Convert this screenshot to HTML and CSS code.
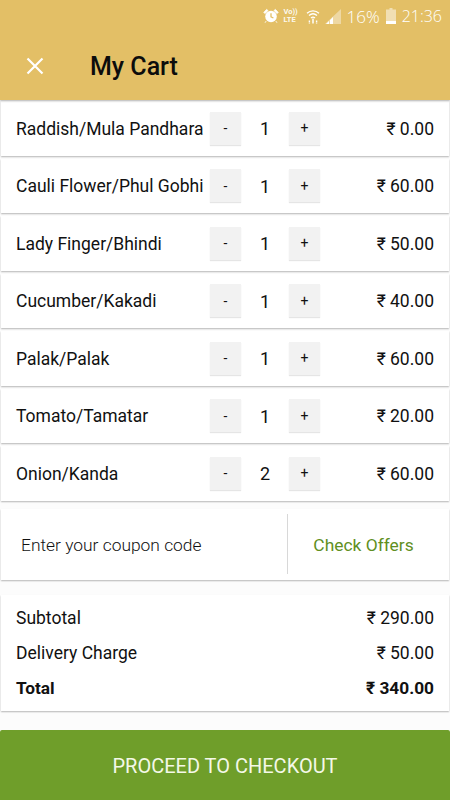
FILE: index.html
```html
<!DOCTYPE html>
<html lang="en">
<head>
<meta charset="utf-8">
<title>My Cart</title>
<link rel="stylesheet" href="styles.css">
</head>
<body>
<div class="screen">
  <header class="header">
    <div class="status">
      <svg class="ic-alarm" width="16" height="16" viewBox="0 0 16 16"><circle cx="8" cy="8.5" r="5.8" fill="#fff"/><path d="M8 5.2V8.8L10.4 10" stroke="#e3bf66" stroke-width="1.3" fill="none"/><path d="M0.8 4.4 3.6 1.4 5 2.6 2 5.6ZM15.2 4.4 12.4 1.4 11 2.6 14 5.6ZM3.2 13l-1.2 1.8M12.8 13l1.2 1.8" fill="#fff" stroke="#fff" stroke-width="0.8"/></svg>
      <span class="lte"><span>Vo))</span><span>LTE</span></span>
      <svg class="ic-wifi" width="14" height="17" viewBox="0 0 14 17"><path d="M1 5.2C4.4 2 9.6 2 13 5.2M3 7.6C5.4 5.4 8.6 5.4 11 7.6M5 10C6.2 9 7.8 9 9 10" stroke="#fff" stroke-width="1.3" fill="none"/><path d="M7 10.5v5" stroke="#fff" stroke-width="1.5"/><path d="M3.4 12.5v3M10.6 12.5v3" stroke="#fff" stroke-width="1.4" stroke-dasharray="1.5 .6"/></svg>
      <svg class="ic-signal" width="16" height="15" viewBox="0 0 16 15"><path d="M16 0V15H0Z" fill="#fff" opacity=".4"/><path d="M1 15 4 12V15ZM5 15V11L8 8V15Z" fill="#fff"/></svg>
      <span class="pct">16%</span>
      <svg class="ic-batt" width="10" height="16" viewBox="0 0 10 16"><path d="M3.5 0H6.5V1.4H10V16H0V1.4H3.5Z" fill="#fff" opacity=".5"/><path d="M0 13H10V16H0Z" fill="#fff"/></svg>
      <span class="time">21:36</span>
    </div>
    <div class="toolbar">
      <svg class="ic-close" width="18" height="18" viewBox="0 0 18 18"><path d="M1.5 1.5 16.5 16.5M16.5 1.5 1.5 16.5" stroke="#fff" stroke-width="2.2" fill="none"/></svg>
      <h1 class="title">My Cart</h1>
    </div>
  </header>

  <main class="items">
    <div class="card row"><span class="name">Raddish/Mula Pandhara</span><div class="qty"><span class="btn">-</span><span class="count">1</span><span class="btn">+</span></div><span class="price">₹ 0.00</span></div>
    <div class="card row"><span class="name">Cauli Flower/Phul Gobhi</span><div class="qty"><span class="btn">-</span><span class="count">1</span><span class="btn">+</span></div><span class="price">₹ 60.00</span></div>
    <div class="card row"><span class="name">Lady Finger/Bhindi</span><div class="qty"><span class="btn">-</span><span class="count">1</span><span class="btn">+</span></div><span class="price">₹ 50.00</span></div>
    <div class="card row"><span class="name">Cucumber/Kakadi</span><div class="qty"><span class="btn">-</span><span class="count">1</span><span class="btn">+</span></div><span class="price">₹ 40.00</span></div>
    <div class="card row"><span class="name">Palak/Palak</span><div class="qty"><span class="btn">-</span><span class="count">1</span><span class="btn">+</span></div><span class="price">₹ 60.00</span></div>
    <div class="card row"><span class="name">Tomato/Tamatar</span><div class="qty"><span class="btn">-</span><span class="count">1</span><span class="btn">+</span></div><span class="price">₹ 20.00</span></div>
    <div class="card row"><span class="name">Onion/Kanda</span><div class="qty"><span class="btn">-</span><span class="count">2</span><span class="btn">+</span></div><span class="price">₹ 60.00</span></div>
  </main>

  <section class="card coupon">
    <span class="coupon-input">Enter your coupon code</span>
    <span class="offers">Check Offers</span>
  </section>

  <section class="card summary">
    <div class="sum-row"><span>Subtotal</span><span>₹ 290.00</span></div>
    <div class="sum-row"><span>Delivery Charge</span><span>₹ 50.00</span></div>
    <div class="sum-row total"><span>Total</span><span>₹ 340.00</span></div>
  </section>

  <div class="checkout">PROCEED TO CHECKOUT</div>
</div>
</body>
</html>
```
FILE: styles.css
```css
* { box-sizing: border-box; }
html, body { margin: 0; padding: 0; }
body { font-family: Roboto, "DejaVu Sans", sans-serif; color: #111; background: #fcfcfc; }
.screen { width: 450px; height: 800px; overflow: hidden; display: flex; flex-direction: column; background: #fcfcfc; }

.header { height: 100px; flex: none; background: #e3bf66; box-shadow: 0 1px 2px rgba(0,0,0,.3); position: relative; }
.status { height: 32px; padding: 0 8px 0 0; display: flex; justify-content: flex-end; align-items: center; color: #fff; }
.ic-alarm { margin-right: 5px; }
.lte { display: flex; flex-direction: column; font-size: 7.5px; font-weight: 700; line-height: 8px; margin-right: 7px; width: 15px; opacity: .9; }
.lte span { height: 8px; }
.ic-wifi { margin-right: 5px; }
.ic-signal { margin-right: 6px; }
.pct { font-size: 17px; font-weight: 300; white-space: nowrap; font-family: "Open Sans", sans-serif; margin-right: 6px; }
.ic-batt { margin-right: 6px; }
.time { font-size: 16px; font-weight: 300; white-space: nowrap; font-family: "Open Sans", sans-serif; }

.toolbar { height: 68px; display: flex; align-items: center; padding-left: 26px; }
.title { margin: 2px 0 0 46px; font-size: 25px; font-weight: 500; color: #0c0c0c; line-height: 30px; }

.items { margin-top: 1px; display: flex; flex-direction: column; gap: 3px; }
.card { background: #fff; margin: 0 1px; box-shadow: 0 1px 1.5px rgba(0,0,0,.28); }
.row { height: 54.5px; display: flex; align-items: center; padding: 1px 15px 0; font-size: 17.5px; }
.name { width: 194px; flex: none; white-space: nowrap; }
.qty { display: flex; align-items: center; width: 110px; flex: none; margin-top: -1px; }
.btn { width: 31px; height: 33px; flex: none; background: #f2f2f2; box-shadow: 0 1px 1px rgba(0,0,0,.1); display: flex; align-items: center; justify-content: center; font-size: 14px; }
.count { flex: 1; text-align: center; font-size: 18px; padding-top: 1px; }
.price { flex: 1; text-align: right; font-size: 17.5px; white-space: nowrap; }

.coupon { margin-top: 8px; height: 71px; display: flex; align-items: center; font-size: 17.4px; }
.coupon-input { width: 287px; height: 60px; padding: 1px 0 0 20px; display: flex; align-items: center; border-right: 1px solid #d8d8d8; color: #111; font-weight: 300; }
.offers { flex: 1; text-align: center; color: #5f8f22; padding: 2px 10px 0 0; }

.summary { margin-top: 15px; height: 116px; padding: 6px 15px 0; font-size: 17.5px; display: flex; flex-direction: column; }
.sum-row { height: 35px; display: flex; align-items: center; justify-content: space-between; }
.total { font-weight: 700; font-size: 17.3px; }

.checkout { margin-top: 19px; height: 70px; flex: none; background: #6f9e2a; border-radius: 2px 2px 0 0; color: #f4f8e8; font-size: 20px; padding-top: 2px; display: flex; align-items: center; justify-content: center; }
```
